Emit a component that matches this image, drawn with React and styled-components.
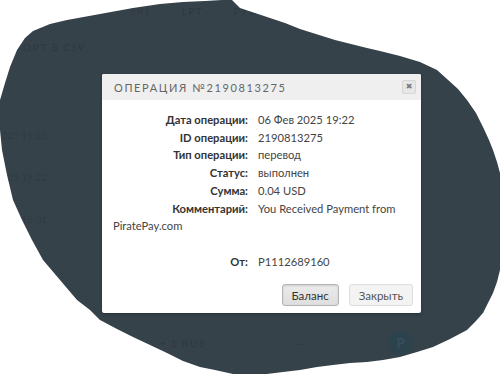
import React from "react"
import styled, { createGlobalStyle } from "styled-components"

const GlobalStyle = createGlobalStyle`
    html, body {
        margin: 0;
        padding: 0;
        background: #ffffff;
    }
    body {
        font-family: "Lato", "Liberation Sans", sans-serif;
    }
`

// hand-drawn blob that dims the page behind the dialog
const BLOB = [
    [0, 100], [5, 83], [10, 67], [17, 50], [25, 38], [33, 31], [50, 24], [67, 20], [100, 14],
    [133, 8], [160, 4], [183, 2], [205, 1], [222, 0], [232, 0], [240, 8], [255, 13], [267, 17],
    [285, 23], [300, 29], [335, 40], [367, 48], [380, 51], [400, 56], [420, 62], [437, 70],
    [447, 79], [458, 89], [467, 100], [476, 113], [483, 127], [489, 140], [493, 150], [497, 162],
    [500, 173], [500, 270], [497, 282], [493, 293], [488, 303], [483, 313], [475, 322], [467, 330],
    [450, 339], [433, 347], [417, 352], [400, 357], [383, 360], [367, 362], [350, 363], [333, 365],
    [317, 367], [300, 370], [283, 372], [267, 374], [233, 374], [215, 370], [200, 367], [183, 361],
    [167, 353], [150, 345], [133, 337], [117, 329], [100, 320], [90, 310], [77, 300], [60, 280],
    [43, 260], [32, 240], [22, 220], [13, 200], [7, 175], [2, 150], [0, 130],
]
const blobPath = "M" + BLOB.map(([x, y]) => `${x} ${y}`).join(" L") + " Z"

const Page = styled.div`
    position: relative;
    width: 500px;
    height: 374px;
    overflow: hidden;
    background: #ffffff;
`

const Backdrop = styled.div`
    position: absolute;
    inset: 0;
    background: #36424a;
    clip-path: path("${blobPath}");
    color: rgba(0, 0, 0, 0.13);
    font-size: 10px;
    font-weight: 700;
    letter-spacing: 1.4px;
    line-height: 14px;
    display: flex;
    flex-direction: column;
`

const GhostNav = styled.div`
    display: flex;
    gap: 30px;
    padding-left: 130px;
    margin-top: 4px;
`

const GhostExport = styled.div`
    margin: 22px 0 0 23px;
`

const GhostDates = styled.div`
    display: flex;
    flex-direction: column;
    align-items: flex-end;
    gap: 28px;
    width: 47px;
    margin-top: 74px;
    font-weight: 400;
    letter-spacing: 0;
    white-space: nowrap;
`

const GhostFooter = styled.div`
    display: flex;
    align-items: center;
    margin-top: 104px;
    padding-left: 160px;
`

const GhostAmount = styled.span`
    width: 137px;
`

const GhostDash = styled.span`
    width: 91px;
`

const GhostAvatar = styled.span`
    width: 25px;
    height: 25px;
    border-radius: 50%;
    background: #2c434e;
    display: flex;
    align-items: center;
    justify-content: center;
    font-size: 13px;
    letter-spacing: 0;
    color: #36505b;
`

const Modal = styled.div`
    position: absolute;
    left: 102px;
    top: 74px;
    width: 319px;
    background: #ffffff;
    border-radius: 2px;
    box-shadow: 0 1px 3px rgba(0, 0, 0, 0.35);
    overflow: hidden;
`

const Header = styled.div`
    height: 26px;
    display: flex;
    align-items: center;
    justify-content: space-between;
    padding: 0 5px 0 12px;
    background: #efefef;
`

const Title = styled.div`
    font-size: 11px;
    letter-spacing: 1.6px;
    text-transform: uppercase;
    color: #666666;
`

const CloseButton = styled.button`
    width: 14px;
    height: 14px;
    padding: 0;
    border: 1px solid #d6d6d6;
    border-radius: 2px;
    background: #e7e7e7;
    color: #7a7a7a;
    font-size: 8px;
    line-height: 12px;
    font-family: "DejaVu Sans", sans-serif;
    cursor: pointer;
`

const Body = styled.div`
    padding: 11px 12px 0 11px;
    font-size: 11.2px;
    line-height: 17.7px;
    color: #444444;
`

const Row = styled.div`
    margin-top: ${(p) => (p.$spaced ? "17.7px" : "0")};
`

const Label = styled.span`
    display: inline-block;
    width: 135px;
    margin-right: 10px;
    text-align: right;
    font-weight: 700;
    color: #333333;
`

const Footer = styled.div`
    display: flex;
    justify-content: flex-end;
    gap: 10px;
    padding: 14px 8px 7px;
`

const Button = styled.button`
    height: 22px;
    padding: 0 9px;
    border-radius: 3px;
    font-family: inherit;
    font-size: 11.5px;
    cursor: pointer;
    border: 1px solid ${(p) => (p.$primary ? "#b4b4b4" : "#dddddd")};
    background: ${(p) => (p.$primary ? "linear-gradient(#ebebeb, #dedede)" : "#f3f3f3")};
    color: ${(p) => (p.$primary ? "#333333" : "#555555")};
    box-shadow: ${(p) => (p.$primary ? "inset 0 1px 2px rgba(0,0,0,0.12)" : "none")};
`

const rows = [
    ["Дата операции:", "06 Фев 2025 19:22"],
    ["ID операции:", "2190813275"],
    ["Тип операции:", "перевод"],
    ["Статус:", "выполнен"],
    ["Сумма:", "0.04 USD"],
    ["Комментарий:", "You Received Payment from PiratePay.com"],
]

const App = () => (
    <>
        <GlobalStyle />
        <Page>
            <Backdrop>
                <GhostNav>
                    <span>SKL</span>
                    <span>LPT</span>
                    <span>PYD</span>
                </GhostNav>
                <GhostExport>ОРТ В CSV</GhostExport>
                <GhostDates>
                    <span>2025 19:23</span>
                    <span>25 19:22</span>
                    <span>18:01</span>
                </GhostDates>
                <GhostFooter>
                    <GhostAmount>+ 1 RUB</GhostAmount>
                    <GhostDash>—</GhostDash>
                    <GhostAvatar>P</GhostAvatar>
                </GhostFooter>
            </Backdrop>
            <Modal>
                <Header>
                    <Title>Операция №2190813275</Title>
                    <CloseButton aria-label="Закрыть">✖</CloseButton>
                </Header>
                <Body>
                    {rows.map(([label, value]) => (
                        <Row key={label}>
                            <Label>{label}</Label>
                            {value}
                        </Row>
                    ))}
                    <Row $spaced>
                        <Label>От:</Label>
                        P1112689160
                    </Row>
                </Body>
                <Footer>
                    <Button $primary>Баланс</Button>
                    <Button>Закрыть</Button>
                </Footer>
            </Modal>
        </Page>
    </>
)

export default App
